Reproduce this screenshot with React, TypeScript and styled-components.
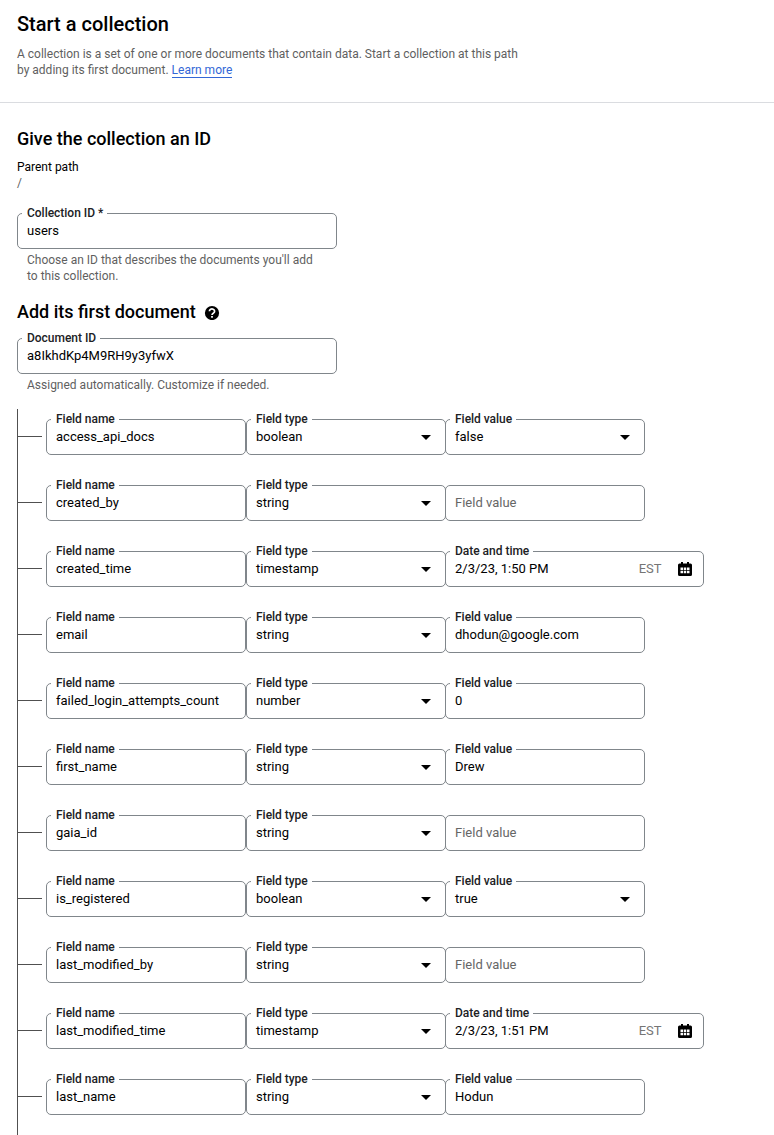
import React from "react";
import styled, { createGlobalStyle } from "styled-components";

const GlobalStyle = createGlobalStyle`
  *, *::before, *::after { box-sizing: border-box; }
  html, body { margin: 0; background: #fff; }
  body { font-family: Roboto, "Liberation Sans", sans-serif; color: #000; overflow: hidden; }
  h1, h2, p { margin: 0; }
`;

const Page = styled.main`
  width: 774px;
  height: 1135px;
  overflow: hidden;
  background: #fff;
`;

const Header = styled.header`
  height: 103px;
  padding: 12px 17px 0;
  border-bottom: 1px solid #dadce0;
`;

const Title = styled.h1`
  font-size: 20px;
  font-weight: 500;
  line-height: 24px;
`;

const Intro = styled.p`
  margin-top: 10px;
  font-size: 12px;
  line-height: 16px;
  color: #5f5f5f;
  white-space: nowrap;
`;

const Link = styled.a`
  color: #3367d6;
  border-bottom: 1px solid #3367d6;
`;

const Body = styled.div`
  padding: 24px 0 0 17px;
`;

const Heading = styled.h2`
  display: flex;
  align-items: center;
  gap: 8px;
  font-size: 18px;
  font-weight: 500;
  line-height: 24px;
`;

const ParentLabel = styled.div`
  margin-top: 8px;
  font-size: 12px;
  line-height: 16px;
`;

const ParentValue = styled(ParentLabel)`
  margin-top: 0;
  color: #5f5f5f;
`;

const Field = styled.div<{ $width: number; $overlap?: boolean }>`
  position: relative;
  display: flex;
  flex: none;
  align-items: center;
  width: ${(p) => p.$width}px;
  height: 36px;
  margin-left: ${(p) => (p.$overlap ? -1 : 0)}px;
  padding: 0 11px 0 9px;
  border: 1px solid #80868b;
  border-radius: 5px;
`;

const FieldLabel = styled.span`
  position: absolute;
  top: -8px;
  left: 4px;
  padding: 0 4px 0 5px;
  background: #fff;
  font-size: 12px;
  font-weight: 500;
  line-height: 14px;
  letter-spacing: -0.02px;
  color: #202124;
  white-space: nowrap;
`;

const FieldText = styled.span<{ $muted?: boolean }>`
  flex: 1;
  font-size: 13px;
  line-height: 16px;
  color: ${(p) => (p.$muted ? "#666" : "#000")};
  white-space: nowrap;
`;

const Zone = styled.span`
  margin-right: 16.5px;
  font-size: 13px;
  line-height: 16px;
  color: #757575;
`;

const Arrow = styled.span`
  width: 0;
  height: 0;
  margin-right: 3px;
  border: 5px solid transparent;
  border-top-color: #000;
  border-bottom: 0;
`;

const Hint = styled.p`
  margin-top: 3px;
  padding-left: 10px;
  font-size: 12px;
  line-height: 16px;
  color: #5f5f5f;
`;

const Top = styled.div<{ $gap: number }>`
  margin-top: ${(p) => p.$gap}px;
`;

const Tree = styled.div`
  height: 740px;
  margin-top: 16px;
  padding-top: 10px;
  border-left: 1px solid #505050;
`;

const Row = styled.div`
  display: flex;
  align-items: center;
  height: 36px;
  margin-bottom: 30px;
`;

const Branch = styled.span`
  width: 24px;
  height: 1px;
  margin: 0 4px 1px 0;
  background: #505050;
`;

const HelpIcon = () => (
  <svg width="16" height="16" viewBox="0 0 16 16" aria-hidden="true">
    <circle cx="8" cy="9" r="7.1" fill="#000" />
    <path d="M5.4 7.3a2.6 2.3 0 1 1 4.1 1.8c-.9.6-1.5.9-1.5 1.9" fill="none" stroke="#fff" strokeWidth="1.7" />
    <rect x="7.1" y="12" width="1.8" height="1.7" fill="#fff" />
  </svg>
);

const CalendarIcon = () => (
  <svg width="14" height="14" viewBox="0 0 14 14" aria-hidden="true">
    <path d="M3 0h2v1.5h4V0h2v1.5h1.5A1.5 1.5 0 0 1 14 3v9.5a1.5 1.5 0 0 1-1.5 1.5h-11A1.5 1.5 0 0 1 0 12.500V3a1.500 1.500 0 0 1 1.500-1.500H3z" />
    <path
      fill="#fff"
      d="M2.500 5.500h2.500v2.500H2.500zM5.750 5.500h2.500v2.500h-2.500zM9 5.500h2.500v2.500H9zM2.500 8.800h2.500v2.500H2.500zM5.750 8.800h2.500v2.500h-2.500zM9 8.800h2.500v2.500H9z"
    />
  </svg>
);

type Kind = "text" | "select" | "date";
const rows: { name: string; type: string; value: string; kind: Kind }[] = [
  { name: "access_api_docs", type: "boolean", value: "false", kind: "select" },
  { name: "created_by", type: "string", value: "", kind: "text" },
  { name: "created_time", type: "timestamp", value: "2/3/23, 1:50 PM", kind: "date" },
  { name: "email", type: "string", value: "dhodun@google.com", kind: "text" },
  { name: "failed_login_attempts_count", type: "number", value: "0", kind: "text" },
  { name: "first_name", type: "string", value: "Drew", kind: "text" },
  { name: "gaia_id", type: "string", value: "", kind: "text" },
  { name: "is_registered", type: "boolean", value: "true", kind: "select" },
  { name: "last_modified_by", type: "string", value: "", kind: "text" },
  { name: "last_modified_time", type: "timestamp", value: "2/3/23, 1:51 PM", kind: "date" },
  { name: "last_name", type: "string", value: "Hodun", kind: "text" },
];

export default function App() {
  return (
    <Page>
      <GlobalStyle />
      <Header>
        <Title>Start a collection</Title>
        <Intro>
          A collection is a set of one or more documents that contain data. Start a collection at this path
          <br />
          by adding its first document. <Link>Learn more</Link>
        </Intro>
      </Header>
      <Body>
        <Heading>Give the collection an ID</Heading>
        <ParentLabel>Parent path</ParentLabel>
        <ParentValue>/</ParentValue>
        <Top $gap={22}>
          <Field $width={320}>
            <FieldLabel>Collection ID *</FieldLabel>
            <FieldText>users</FieldText>
          </Field>
          <Hint>
            Choose an ID that describes the documents you'll add
            <br />
            to this collection.
          </Hint>
        </Top>
        <Top $gap={16}>
          <Heading>
            Add its first document <HelpIcon />
          </Heading>
        </Top>
        <Top $gap={14}>
          <Field $width={320}>
            <FieldLabel>Document ID</FieldLabel>
            <FieldText>a8IkhdKp4M9RH9y3yfwX</FieldText>
          </Field>
          <Hint>Assigned automatically. Customize if needed.</Hint>
        </Top>
        <Tree>
          {rows.map((row) => (
            <Row key={row.name}>
              <Branch />
              <Field $width={200}>
                <FieldLabel>Field name</FieldLabel>
                <FieldText>{row.name}</FieldText>
              </Field>
              <Field $width={200}>
                <FieldLabel>Field type</FieldLabel>
                <FieldText>{row.type}</FieldText>
                <Arrow />
              </Field>
              <Field $width={row.kind === "date" ? 259 : 200} $overlap>
                {row.value && <FieldLabel>{row.kind === "date" ? "Date and time" : "Field value"}</FieldLabel>}
                <FieldText $muted={!row.value}>{row.value || "Field value"}</FieldText>
                {row.kind === "select" && <Arrow />}
                {row.kind === "date" && (
                  <>
                    <Zone>EST</Zone>
                    <CalendarIcon />
                  </>
                )}
              </Field>
            </Row>
          ))}
        </Tree>
      </Body>
    </Page>
  );
}
